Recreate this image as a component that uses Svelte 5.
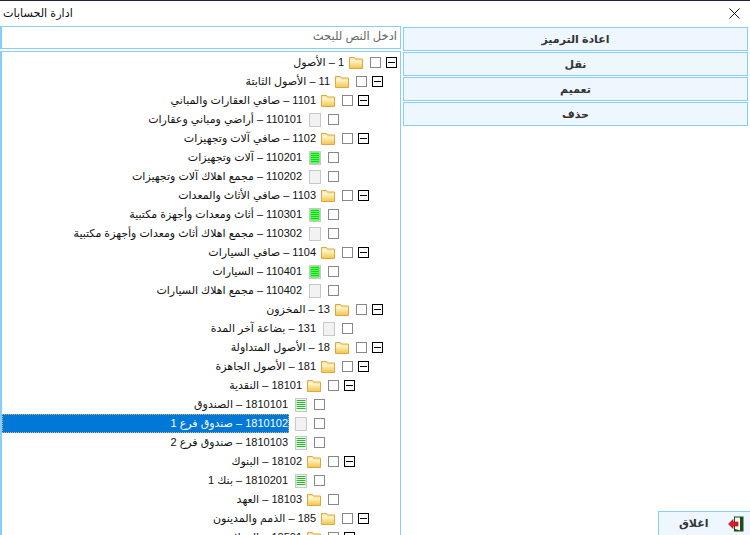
<script lang="ts">
	type Kind = 'folder' | 'blank' | 'green' | 'lines';

	interface Node {
		code: string;
		name: string;
		level: number;
		kind: Kind;
		open?: boolean;
	}

	const nodes: Node[] = [
		{ code: '1', name: 'الأصول', level: 0, kind: 'folder', open: true },
		{ code: '11', name: 'الأصول الثابتة', level: 1, kind: 'folder', open: true },
		{ code: '1101', name: 'صافي العقارات والمباني', level: 2, kind: 'folder', open: true },
		{ code: '110101', name: 'أراضي ومباني وعقارات', level: 3, kind: 'blank' },
		{ code: '1102', name: 'صافي آلات وتجهيزات', level: 2, kind: 'folder', open: true },
		{ code: '110201', name: 'آلات وتجهيزات', level: 3, kind: 'green' },
		{ code: '110202', name: 'مجمع اهلاك آلات وتجهيزات', level: 3, kind: 'blank' },
		{ code: '1103', name: 'صافي الأثاث والمعدات', level: 2, kind: 'folder', open: true },
		{ code: '110301', name: 'أثاث ومعدات وأجهزة مكتبية', level: 3, kind: 'green' },
		{ code: '110302', name: 'مجمع اهلاك أثاث ومعدات وأجهزة مكتبية', level: 3, kind: 'blank' },
		{ code: '1104', name: 'صافي السيارات', level: 2, kind: 'folder', open: true },
		{ code: '110401', name: 'السيارات', level: 3, kind: 'green' },
		{ code: '110402', name: 'مجمع اهلاك السيارات', level: 3, kind: 'blank' },
		{ code: '13', name: 'المخزون', level: 1, kind: 'folder', open: true },
		{ code: '131', name: 'بضاعة آخر المدة', level: 2, kind: 'blank' },
		{ code: '18', name: 'الأصول المتداولة', level: 1, kind: 'folder', open: true },
		{ code: '181', name: 'الأصول الجاهزة', level: 2, kind: 'folder', open: true },
		{ code: '18101', name: 'النقدية', level: 3, kind: 'folder', open: true },
		{ code: '1810101', name: 'الصندوق', level: 4, kind: 'lines' },
		{ code: '1810102', name: 'صندوق فرع 1', level: 4, kind: 'blank' },
		{ code: '1810103', name: 'صندوق فرع 2', level: 4, kind: 'lines' },
		{ code: '18102', name: 'البنوك', level: 3, kind: 'folder', open: true },
		{ code: '1810201', name: 'بنك 1', level: 4, kind: 'lines' },
		{ code: '18103', name: 'العهد', level: 3, kind: 'folder' },
		{ code: '185', name: 'الذمم والمدينون', level: 2, kind: 'folder', open: true },
		{ code: '18501', name: 'العملاء', level: 3, kind: 'folder', open: true }
	];

	const actions = ['اعادة الترميز', 'نقل', 'تعميم', 'حذف'];

	let selected = $state('1810102');
	let query = $state('');
	let shown = $derived(nodes.filter((n) => n.name.includes(query.trim()) || n.code.includes(query.trim())));
</script>

<div class="window">
	<header class="titlebar">
		<span class="title">ادارة الحسابات</span>
		<button class="close-x" aria-label="Close">
			<svg viewBox="0 0 11 11" width="11" height="11"><path d="M0.5 0.5 10.5 10.5M10.5 0.5 0.5 10.5" stroke="#111" fill="none"/></svg>
		</button>
	</header>

	<div class="content">
		<section class="left">
			<input class="search" dir="rtl" placeholder="ادخل النص للبحث" bind:value={query} />
			<div class="tree" dir="rtl">
				{#each shown as node}
					<div class="row" style="padding-right: {3 + node.level * 14}px">
						<span class="expander">
							{#if node.open}
								<svg viewBox="0 0 11 11" width="11" height="11"><rect x="0.5" y="0.5" width="10" height="10" fill="#fff" stroke="#000"/><path d="M2 5.5H9" stroke="#000"/></svg>
							{/if}
						</span>
						<span class="check"></span>
						<span class="icon">
							{#if node.kind === 'folder'}
								<svg viewBox="0 0 14 12" width="14" height="12">
									<path d="M0.5 11.500V0.500H5.500L6.500 2H13.500V11.500Z" fill="#fbe9a8" stroke="#e0a544"/>
									<rect x="1" y="4" width="12" height="7" fill="url(#folderFill)"/>
									<path d="M1.500 3.200H6" stroke="#fff" stroke-width="1"/>
								</svg>
							{:else}
								<svg viewBox="0 0 12 14" width="12" height="14">
									<rect x="0.5" y="0.5" width="11" height="13" fill="#f2f2f2" stroke="#c8c8c8"/>
									{#if node.kind === 'green'}
										<rect x="1.500" y="1.500" width="9" height="11" fill="#00e600"/>
										<path d="M1.500 3.500H10.500M1.500 5.500H10.500M1.500 7.500H10.500M1.500 9.500H10.500M1.500 11.500H10.500" stroke="#6fe86f"/>
									{:else if node.kind === 'lines'}
										<path d="M1.500 2.500H10.500M1.500 4.500H10.500M1.500 6.500H10.500M1.500 8.500H10.500M1.500 10.500H10.500" stroke="#22c322"/>
									{/if}
								</svg>
							{/if}
						</span>
						<button class="label" class:selected={selected === node.code} onclick={() => (selected = node.code)}>
							<span>{node.code}</span> – {node.name}
						</button>
					</div>
				{/each}
				<svg class="defs" width="0" height="0">
					<defs>
						<linearGradient id="folderFill" x1="0" y1="0" x2="0" y2="1">
							<stop offset="0" stop-color="#fdf3c4"/>
							<stop offset="1" stop-color="#f3c94f"/>
						</linearGradient>
					</defs>
				</svg>
			</div>
		</section>

		<aside class="right">
			{#each actions as action}
				<button class="action">{action}</button>
			{/each}
			<button class="action exit">
				<span>اغلاق</span>
				<svg viewBox="0 0 16 16" width="16" height="16">
					<rect x="6" y="0.5" width="9.500" height="15" fill="#1d4d1d"/>
					<path d="M7 1.500H12V14.500L7 13Z" fill="#f4f4e8"/>
					<path d="M0.500 8L5 3.500V6H10V10H5V12.500Z" fill="#e8162a" stroke="#8c0d18" stroke-width="0.600"/>
				</svg>
			</button>
		</aside>
	</div>
</div>

<style>
	:global(body) {
		margin: 0;
		background: #fff;
	}

	.window {
		height: 535px;
		overflow: hidden;
		display: flex;
		flex-direction: column;
		box-sizing: border-box;
		border-top: 1px solid #1d2733;
		background: #fff;
		font-family: 'Liberation Sans', 'DejaVu Sans', sans-serif;
		font-size: 11px;
		color: #111;
	}

	.titlebar {
		height: 25px;
		flex-shrink: 0;
		display: flex;
		align-items: center;
		justify-content: space-between;
		padding: 0 10px 0 3px;
	}

	.title {
		font-size: 11.2px;
	}

	.close-x {
		display: flex;
		padding: 0;
		border: none;
		background: none;
	}

	.content {
		flex: 1;
		min-height: 0;
		display: flex;
		gap: 2px;
	}

	.left {
		width: 401px;
		flex-shrink: 0;
		display: flex;
		flex-direction: column;
		gap: 2px;
	}

	.search {
		height: 23px;
		flex-shrink: 0;
		box-sizing: border-box;
		padding: 0 3px 3px;
		border: 1px solid #87cefa;
		border-left-width: 2px;
		outline: none;
		font-family: inherit;
		font-size: 11.5px;
	}
	.search::placeholder {
		color: #666;
		opacity: 1;
	}

	.tree {
		flex: 1;
		min-height: 0;
		overflow: hidden;
		box-sizing: border-box;
		padding-top: 1px;
		border: 1px solid #87cefa;
		border-left-width: 2px;
		border-bottom: none;
	}

	.row {
		height: 19px;
		display: flex;
		align-items: center;
	}

	.expander {
		width: 11px;
		height: 11px;
		flex-shrink: 0;
		display: flex;
	}

	.check {
		width: 11px;
		height: 11px;
		flex-shrink: 0;
		box-sizing: border-box;
		margin-right: 5px;
		border: 1px solid #888;
		background: #fff;
	}

	.icon {
		width: 14px;
		flex-shrink: 0;
		margin-right: 7px;
		display: flex;
	}

	.label {
		flex: 1;
		min-width: 0;
		height: 19px;
		margin-right: 4px;
		padding: 0 1px 0 0;
		border: none;
		background: none;
		font: inherit;
		color: inherit;
		text-align: right;
		white-space: nowrap;
	}

	.label.selected {
		background: #0078d7;
		color: #fff;
		outline: 1px dotted #d8b070;
		outline-offset: -1px;
	}

	.defs {
		position: absolute;
	}

	.right {
		flex: 1;
		min-width: 0;
		display: flex;
		flex-direction: column;
		gap: 1px;
		padding: 1px 2px 0 0;
	}

	.action {
		height: 24px;
		flex-shrink: 0;
		box-sizing: border-box;
		padding: 0;
		border: 1px solid #87cefa;
		background: #eef6fe;
		font-family: inherit;
		font-size: 11px;
		font-weight: bold;
		color: #333;
	}

	.exit {
		width: 92px;
		margin: auto -2px 0 auto;
		display: flex;
		align-items: center;
		justify-content: space-between;
		border-right: none;
		border-bottom: none;
		padding: 0 6px 0 20px;
	}
</style>
